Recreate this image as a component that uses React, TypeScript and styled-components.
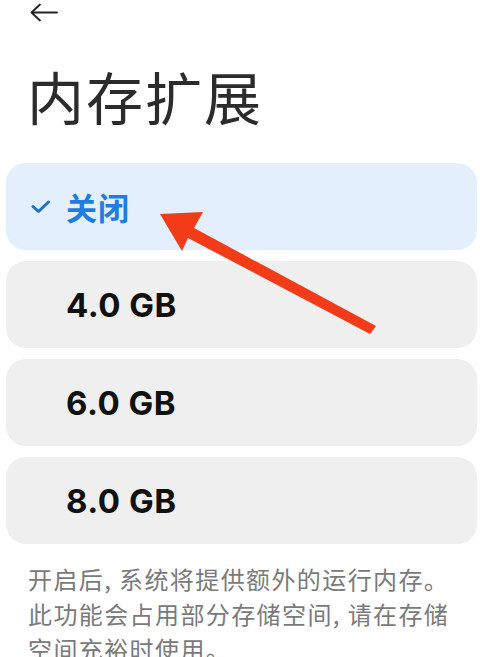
import React from 'react';
import styled, { createGlobalStyle } from 'styled-components';

const GlobalStyle = createGlobalStyle`
  html, body {
    margin: 0;
    padding: 0;
    background: #ffffff;
  }
  body {
    font-family: Inter, "Noto Sans CJK SC", "Noto Sans", sans-serif;
  }
`;

const Page = styled.div`
  position: relative;
  width: 480px;
  height: 657px;
  overflow: hidden;
  background: #ffffff;
`;

const TopBar = styled.div`
  height: 26px;
  padding-left: 29px;
  display: flex;
  align-items: flex-start;
  padding-top: 3px;
  box-sizing: border-box;
`;

const Title = styled.h1`
  margin: 29px 0 0 27px;
  font-family: "Noto Sans CJK SC", sans-serif;
  font-weight: 400;
  font-size: 57px;
  line-height: 80px;
  color: #2b2b2b;
  letter-spacing: 2px;
`;

const OptionList = styled.div`
  margin-top: 28px;
  padding: 0 3px 0 6px;
  display: flex;
  flex-direction: column;
  gap: 11px;
`;

const Option = styled.div<{ $selected?: boolean }>`
  height: 87px;
  border-radius: 20px;
  background: ${(p) => (p.$selected ? '#e3effd' : '#efefef')};
  display: flex;
  align-items: center;
  padding-left: 24px;
  box-sizing: border-box;
`;

const CheckSlot = styled.div`
  width: 36px;
  display: flex;
  align-items: center;
`;

const OptionLabel = styled.span<{ $selected?: boolean }>`
  font-family: ${(p) =>
    p.$selected ? '"Noto Sans CJK SC", sans-serif' : 'Inter, "Noto Sans CJK SC", sans-serif'};
  font-weight: 700;
  font-size: ${(p) => (p.$selected ? '31px' : '33px')};
  color: ${(p) => (p.$selected ? '#1f7ce0' : '#111111')};
  letter-spacing: ${(p) => (p.$selected ? '1px' : '0.5px')};
`;

const Note = styled.p`
  margin: 17px 18px 0 28px;
  font-family: "Noto Sans CJK SC", sans-serif;
  font-size: 24px;
  line-height: 35px;
  color: #7a7a7a;
  letter-spacing: 1.4px;
`;

const Pointer = styled.svg`
  position: absolute;
  left: 0;
  top: 0;
  pointer-events: none;
`;

const BackArrow = () => (
  <svg width="30" height="20" viewBox="0 0 30 20" fill="none">
    <path d="M28 9.5H3M11 1.5L2.5 9.5L11 17.5" stroke="#222" strokeWidth="1.8" strokeLinecap="round" strokeLinejoin="round" />
  </svg>
);

const Check = () => (
  <svg width="22" height="16" viewBox="0 0 22 16" fill="none">
    <path d="M3 7.5L8.5 12.5L18.5 3" stroke="#1f6fc7" strokeWidth="3" strokeLinecap="round" strokeLinejoin="round" />
  </svg>
);

const options = [
  { label: '关闭', selected: true },
  { label: '4.0 GB' },
  { label: '6.0 GB' },
  { label: '8.0 GB' },
];

export default function App() {
  return (
    <Page>
      <GlobalStyle />
      <TopBar>
        <BackArrow />
      </TopBar>
      <Title>内存扩展</Title>
      <OptionList>
        {options.map((o) => (
          <Option key={o.label} $selected={o.selected}>
            <CheckSlot>{o.selected && <Check />}</CheckSlot>
            <OptionLabel $selected={o.selected}>{o.label}</OptionLabel>
          </Option>
        ))}
      </OptionList>
      <Note>
        开启后, 系统将提供额外的运行内存。此功能会占用部分存储空间, 请在存储空间充裕时使用。
      </Note>
      <Pointer width="480" height="657" viewBox="0 0 480 657">
        <path d="M160 214 L203 212 L194 228 L376 326 L370 334 L188 238 L182 251 Z" fill="#f23b18" />
      </Pointer>
    </Page>
  );
}
